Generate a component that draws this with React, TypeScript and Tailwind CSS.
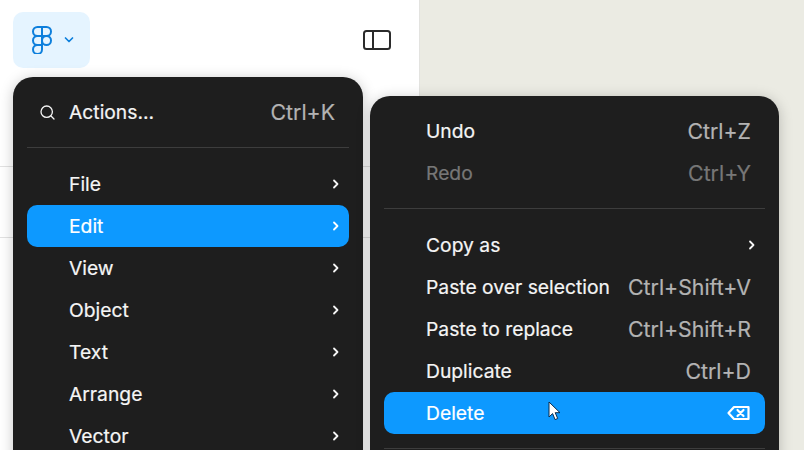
import React from "react";

const Chevron = ({ className = "" }: { className?: string }) => (
  <svg width="8" height="12" viewBox="0 0 8 12" fill="none" className={className}>
    <path d="M2 2.5 5.5 6 2 9.5" stroke="currentColor" strokeWidth="1.8" strokeLinecap="round" strokeLinejoin="round" />
  </svg>
);

const Row = ({
  label,
  shortcut,
  chevron,
  active,
  disabled,
  icon,
}: {
  label: string;
  shortcut?: string;
  chevron?: boolean;
  active?: boolean;
  disabled?: boolean;
  icon?: React.ReactNode;
}) => (
  <div
    className={
      "flex h-[42px] items-center justify-between rounded-[10px] pl-[42px] pr-[14px] " +
      (active ? "bg-[#0d99ff] text-white " : disabled ? "text-[#777777] " : "text-[#f5f5f5] ")
    }
  >
    <span>{label}</span>
    {shortcut && <span className={"text-[21.3px] " + (disabled ? "text-[#777777]" : "text-[#b3b3b3]")}>{shortcut}</span>}
    {chevron && <Chevron className="-mr-[5px]" />}
    {icon}
  </div>
);

const Divider = () => <div className="h-px bg-[#3d3d3d]" />;

export default function App() {
  return (
    <div className="relative flex h-[450px] w-[804px] overflow-hidden bg-[#ebebe3] font-['Inter',sans-serif] text-[19.3px] leading-[42px] [-webkit-text-stroke:0.2px]">
      <div className="w-[420px] shrink-0 border-r border-[#e3e3e0] bg-white">
        <div className="flex h-[167px] items-start justify-between border-b border-[#e2e2e2] pl-[13px] pr-[28px] pt-3">
          <div className="flex h-[56px] w-[77px] items-center gap-[12px] rounded-[10px] bg-[#e5f4ff] pl-[19px] text-[#0d7fdc]">
            <svg width="20" height="28" viewBox="0 0 20 28" fill="none" stroke="currentColor" strokeWidth="2">
              <path d="M10 1H5.5a4.5 4.5 0 0 0 0 9H10V1Z" />
              <path d="M10 1h4.5a4.5 4.5 0 0 1 0 9H10V1Z" />
              <path d="M10 10H5.5a4.5 4.5 0 0 0 0 9H10v-9Z" />
              <circle cx="14.5" cy="14.5" r="4.5" />
              <path d="M10 19H5.5A4.5 4.5 0 1 0 10 23.5V19Z" />
            </svg>
            <svg width="10" height="8" viewBox="0 0 10 8" fill="none" stroke="currentColor" strokeWidth="1.7" strokeLinecap="round" strokeLinejoin="round">
              <path d="M1.5 2 5 5.5 8.5 2" />
            </svg>
          </div>
          <svg className="mt-[18px]" width="28" height="20" viewBox="0 0 28 20" fill="none" stroke="#2b2b2b" strokeWidth="2">
            <rect x="1" y="1" width="26" height="18" rx="2.5" />
            <path d="M10 1v18" />
          </svg>
        </div>
        <div className="h-[71px] border-b border-[#e2e2e2]" />
      </div>

      <div className="absolute left-[13px] top-[77px] w-[350px] rounded-t-[20px] bg-[#1e1e1e] p-[14px] shadow-[0_2px_14px_rgba(0,0,0,0.22)]">
        <div className="flex h-[42px] items-center justify-between pl-[13px] pr-[14px] text-[#f5f5f5]">
          <span className="flex items-center gap-[14px]">
            <svg width="15" height="15" viewBox="0 0 15 15" fill="none" stroke="currentColor" strokeWidth="1.3" strokeLinecap="round">
              <circle cx="6.7" cy="6.7" r="5.7" />
              <path d="m11 11 3 3" />
            </svg>
            Actions...
          </span>
          <span className="text-[21.3px] text-[#b3b3b3]">Ctrl+K</span>
        </div>
        <div className="mb-[15px] mt-[14px]"><Divider /></div>
        {["File", "Edit", "View", "Object", "Text", "Arrange", "Vector"].map((l) => (
          <Row key={l} label={l} chevron active={l === "Edit"} />
        ))}
      </div>

      <div className="absolute left-[370px] top-[96px] w-[409px] rounded-t-[20px] bg-[#1e1e1e] p-[14px] shadow-[0_2px_14px_rgba(0,0,0,0.22)]">
        <Row label="Undo" shortcut="Ctrl+Z" />
        <Row label="Redo" shortcut="Ctrl+Y" disabled />
        <div className="mb-[15px] mt-[14px]"><Divider /></div>
        <Row label="Copy as" chevron />
        <Row label="Paste over selection" shortcut="Ctrl+Shift+V" />
        <Row label="Paste to replace" shortcut="Ctrl+Shift+R" />
        <Row label="Duplicate" shortcut="Ctrl+D" />
        <Row
          label="Delete"
          active
          icon={
            <svg className="-ml-px mr-px" width="23" height="16" viewBox="0 0 23 16" fill="none" stroke="white" strokeWidth="2.2" strokeLinejoin="round" strokeLinecap="round">
              <path d="M7 2h14.5v12H7L1.5 8 7 2Z" />
              <path d="m10.5 5 6 6m0-6-6 6" />
            </svg>
          }
        />
        <div className="mb-[15px] mt-[14px]"><Divider /></div>
      </div>

      <svg className="absolute left-[548px] top-[401px]" width="13" height="20" viewBox="0 0 13 20">
        <path d="M1 1v15l3.6-3.4 2.5 6 2.6-1.1-2.5-5.8H12L1 1Z" fill="white" stroke="#0b2a4a" strokeWidth="1" />
      </svg>
    </div>
  );
}
